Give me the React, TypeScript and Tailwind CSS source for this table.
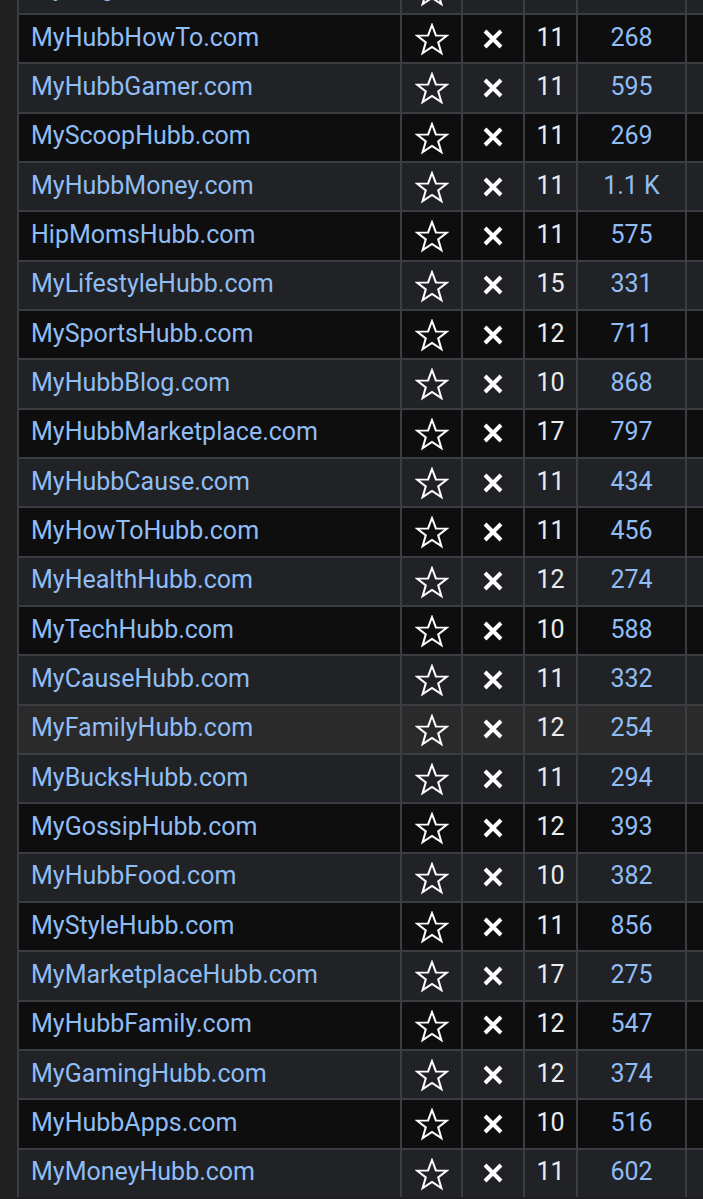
import React, { FC } from 'react'

interface Site {
  name: string
  len?: number
  count?: string
}

const sites: Site[] = [
  { name: 'MyBlogHubb.com' },
  { name: 'MyHubbHowTo.com', len: 11, count: '268' },
  { name: 'MyHubbGamer.com', len: 11, count: '595' },
  { name: 'MyScoopHubb.com', len: 11, count: '269' },
  { name: 'MyHubbMoney.com', len: 11, count: '1.1 K' },
  { name: 'HipMomsHubb.com', len: 11, count: '575' },
  { name: 'MyLifestyleHubb.com', len: 15, count: '331' },
  { name: 'MySportsHubb.com', len: 12, count: '711' },
  { name: 'MyHubbBlog.com', len: 10, count: '868' },
  { name: 'MyHubbMarketplace.com', len: 17, count: '797' },
  { name: 'MyHubbCause.com', len: 11, count: '434' },
  { name: 'MyHowToHubb.com', len: 11, count: '456' },
  { name: 'MyHealthHubb.com', len: 12, count: '274' },
  { name: 'MyTechHubb.com', len: 10, count: '588' },
  { name: 'MyCauseHubb.com', len: 11, count: '332' },
  { name: 'MyFamilyHubb.com', len: 12, count: '254' },
  { name: 'MyBucksHubb.com', len: 11, count: '294' },
  { name: 'MyGossipHubb.com', len: 12, count: '393' },
  { name: 'MyHubbFood.com', len: 10, count: '382' },
  { name: 'MyStyleHubb.com', len: 11, count: '856' },
  { name: 'MyMarketplaceHubb.com', len: 17, count: '275' },
  { name: 'MyHubbFamily.com', len: 12, count: '547' },
  { name: 'MyGamingHubb.com', len: 12, count: '374' },
  { name: 'MyHubbApps.com', len: 10, count: '516' },
  { name: 'MyMoneyHubb.com', len: 11, count: '602' },
]

const StarIcon = () => (
  <svg width="34" height="33" viewBox="0 0 34 33" fill="none">
    <polygon
      points="17,2 20.9,12.4 32,12.6 23.2,19.4 26.4,30.2 17,23.9 7.6,30.2 10.8,19.4 2,12.6 13.1,12.4"
      stroke="#ffffff"
      strokeWidth="2"
      strokeLinejoin="miter"
    />
  </svg>
)

const CrossIcon = () => (
  <svg width="22" height="22" viewBox="0 0 22 22">
    <path d="M3 3L19 19M19 3L3 19" stroke="#ffffff" strokeWidth="4" />
  </svg>
)

const cell = 'flex items-center border-l-2 border-[#3a3d42]'

const Row: FC<{ site: Site; index: number; hover?: boolean }> = ({
  site,
  index,
  hover,
}) => {
  const bg = hover
    ? 'bg-[#2a2a2a]'
    : index % 2 === 0
      ? 'bg-[#202226]'
      : 'bg-[#0e0e0f]'
  return (
    <div
      className={`grid grid-cols-[383px_61px_62px_53px_109px_1fr] h-[49.33px] border-t-2 border-[#3a3d42] ${bg}`}
    >
      <div className={`${cell} pl-[12px] pb-[3px] text-[#8fbdf4]`}>
        {site.name}
      </div>
      <div className={`${cell} justify-center pt-[2px]`}>
        <StarIcon />
      </div>
      <div className={`${cell} justify-center`}>
        <CrossIcon />
      </div>
      <div className={`${cell} justify-center pb-[3px] text-[#ececec]`}>
        {site.len}
      </div>
      <div className={`${cell} justify-center pb-[3px] text-[#8fbdf4]`}>
        {site.count}
      </div>
      <div className={cell} />
    </div>
  )
}

export default function App() {
  return (
    <div
      className="w-[703px] h-[1199px] overflow-hidden bg-[#202020] pl-[17px] text-[25px] leading-none"
      style={{ fontFamily: 'Roboto, "Noto Sans", sans-serif' }}
    >
      <div className="-mt-[36.33px]">
        {sites.map((site, i) => (
          <Row
            key={i}
            site={site}
            index={i}
            hover={site.name === 'MyFamilyHubb.com'}
          />
        ))}
      </div>
    </div>
  )
}
